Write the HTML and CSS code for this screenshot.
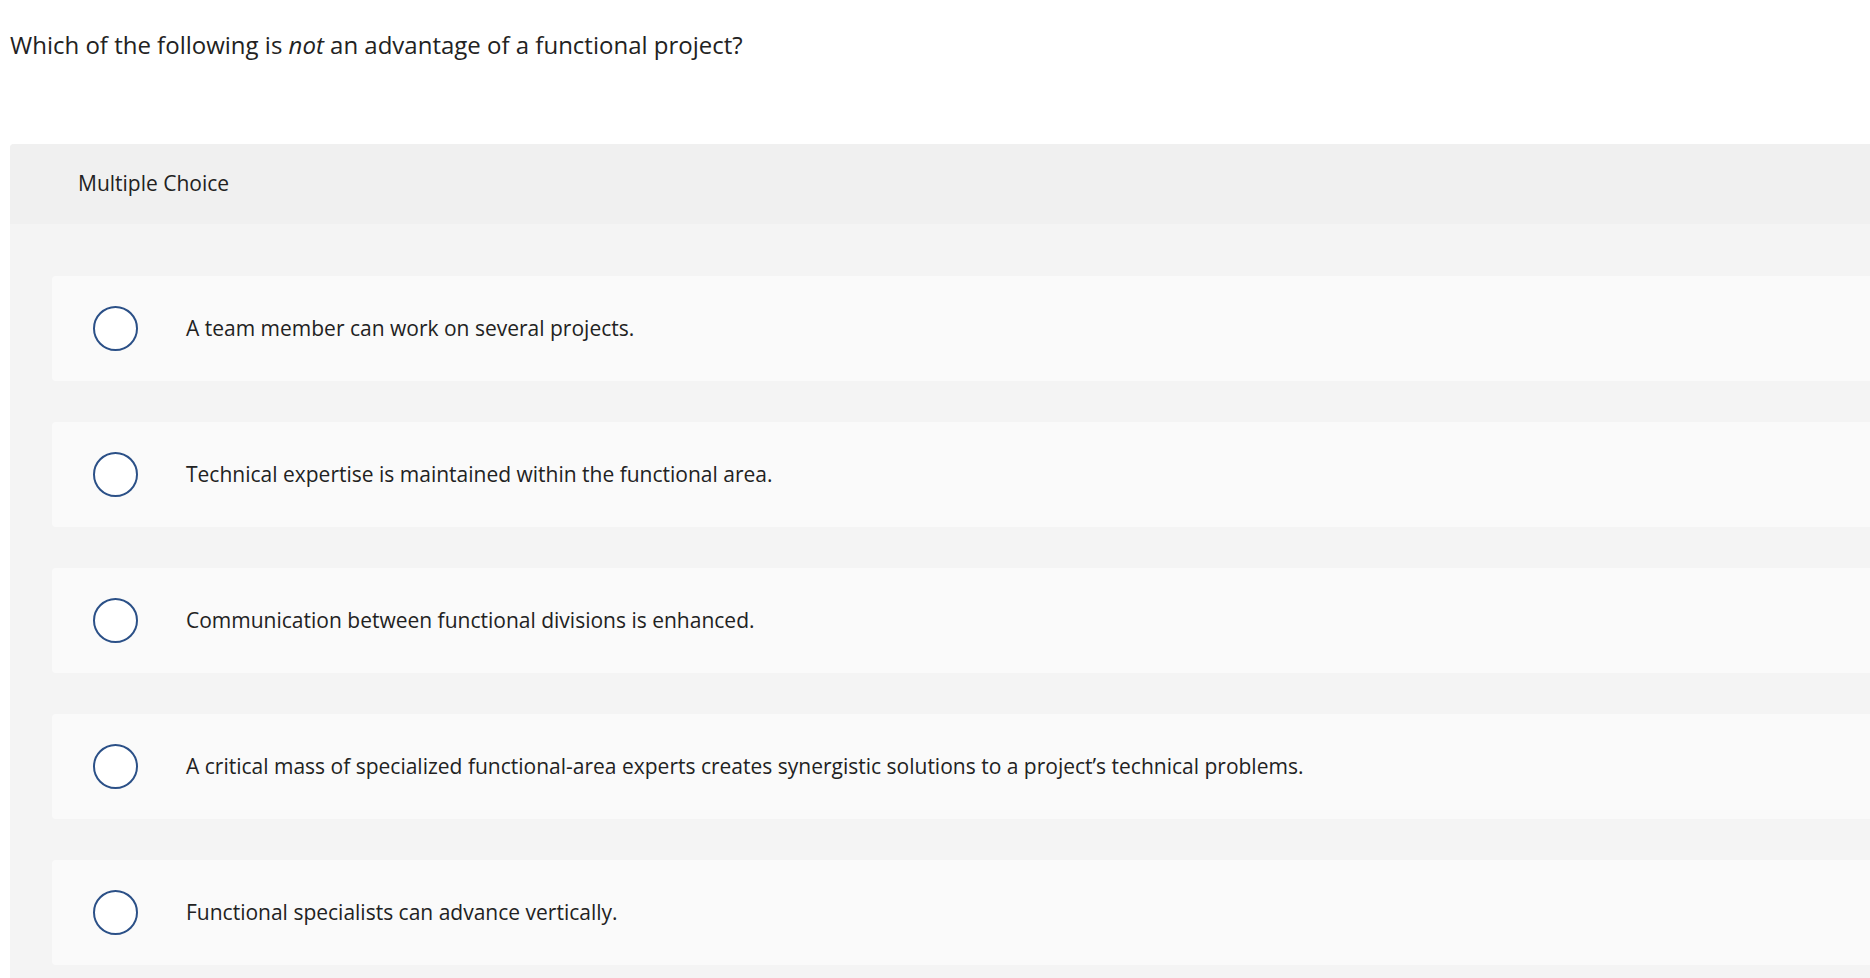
FILE: index.html
```html
<!DOCTYPE html>
<html lang="en">
<head>
<meta charset="utf-8">
<title>Multiple Choice</title>
<link rel="stylesheet" href="styles.css">
</head>
<body>
<main class="page">
  <h1 class="question">Which of the following is <em>not</em> an advantage of a functional project?</h1>
  <section class="panel">
    <header class="panel-head"><span class="panel-title">Multiple Choice</span></header>
    <div class="choices">
      <label class="choice"><span class="radio"></span><span class="choice-text">A team member can work on several projects.</span></label>
      <label class="choice"><span class="radio"></span><span class="choice-text">Technical expertise is maintained within the functional area.</span></label>
      <label class="choice"><span class="radio"></span><span class="choice-text">Communication between functional divisions is enhanced.</span></label>
      <label class="choice"><span class="radio"></span><span class="choice-text">A critical mass of specialized functional-area experts creates synergistic solutions to a project’s technical problems.</span></label>
      <label class="choice"><span class="radio"></span><span class="choice-text">Functional specialists can advance vertically.</span></label>
    </div>
  </section>
</main>
</body>
</html>
```

FILE: styles.css
```css
html, body {
  margin: 0;
  padding: 0;
  background: #ffffff;
}
body {
  font-family: "Open Sans", Lato, Arial, sans-serif;
  color: #222222;
  overflow: hidden;
}
.page {
  padding: 28px 0 0 10px;
}
.question {
  margin: 0;
  font-size: 24px;
  line-height: 34px;
  font-weight: 400;
  color: #222222;
}
.question em {
  font-style: italic;
}
.panel {
  margin-top: 82px;
  background: #f4f4f4;
  border-top-left-radius: 4px;
}
.panel-head {
  height: 80px;
  display: flex;
  align-items: center;
  padding-left: 68px;
  background: #f0f0f0;
  font-size: 21px;
  color: #222222;
  border-top-left-radius: 4px;
}
.panel-title {
  padding-bottom: 2px;
}
.choices {
  display: flex;
  flex-direction: column;
  gap: 41px;
  padding: 52px 0 40px 42px;
}
.choice {
  display: flex;
  align-items: center;
  height: 105px;
  box-sizing: border-box;
  padding-left: 41px;
  background: #fafafa;
  border-radius: 4px 0 0 4px;
}
.radio {
  flex: none;
  width: 41px;
  height: 41px;
  border: 2px solid #2b5087;
  border-radius: 50%;
  background: #ffffff;
}
.choice-text {
  margin-left: 48px;
  padding-bottom: 2px;
  font-size: 21px;
  color: #222222;
}
```
